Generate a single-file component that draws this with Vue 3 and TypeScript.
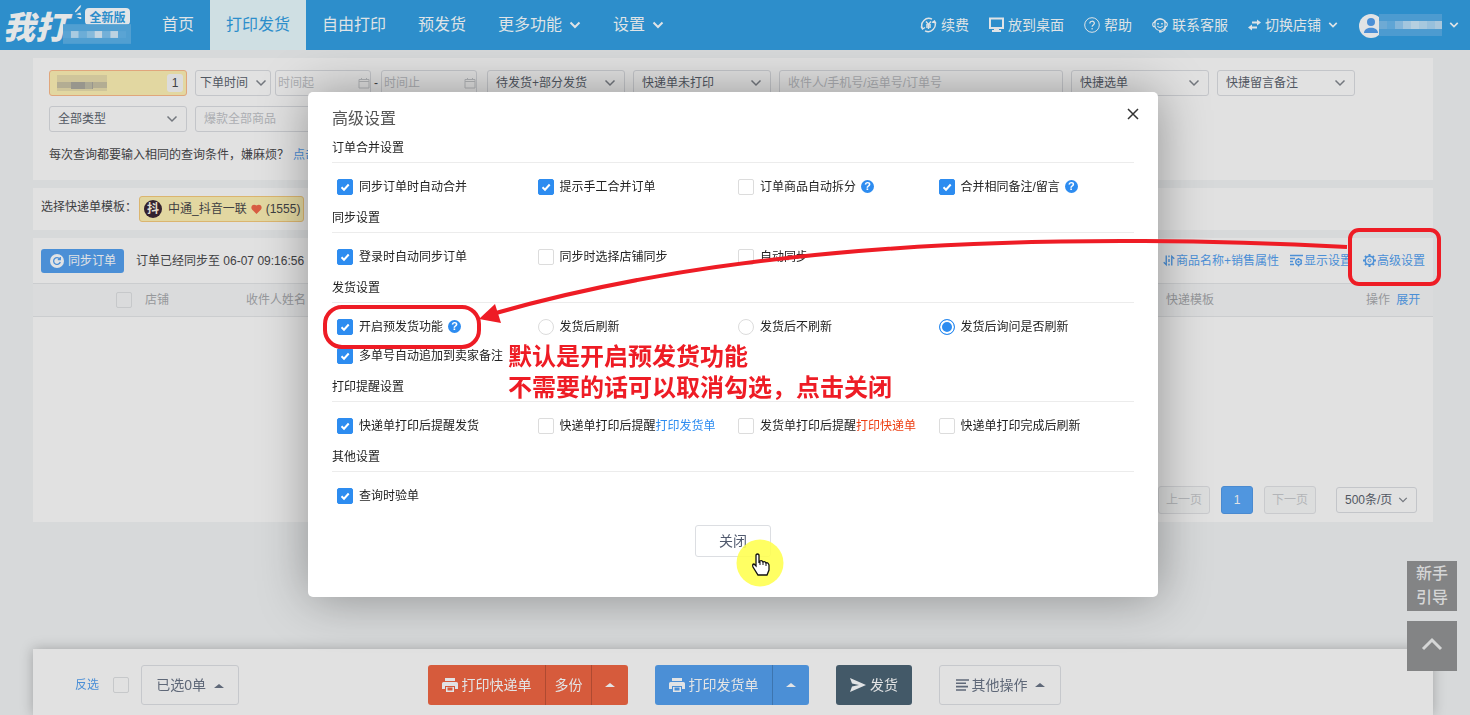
<script setup lang="ts">
import { ref } from 'vue'

interface Option {
  label: string
  type: 'checkbox' | 'radio'
  checked: boolean
  help?: boolean
  link?: string
  tone?: string
}
interface Section {
  title: string
  options: Option[]
}

const box = (label: string, checked: boolean, extra: Partial<Option> = {}): Option => ({
  label,
  type: 'checkbox',
  checked,
  ...extra,
})
const radio = (label: string, checked: boolean): Option => ({ label, type: 'radio', checked })

const sections = ref<Section[]>([
  {
    title: '订单合并设置',
    options: [
      box('同步订单时自动合并', true),
      box('提示手工合并订单', true),
      box('订单商品自动拆分', false, { help: true }),
      box('合并相同备注/留言', true, { help: true }),
    ],
  },
  {
    title: '同步设置',
    options: [box('登录时自动同步订单', true), box('同步时选择店铺同步', false), box('自动同步', false)],
  },
  {
    title: '发货设置',
    options: [
      box('开启预发货功能', true, { help: true }),
      radio('发货后刷新', false),
      radio('发货后不刷新', false),
      radio('发货后询问是否刷新', true),
      box('多单号自动追加到卖家备注', true),
    ],
  },
  {
    title: '打印提醒设置',
    options: [
      box('快递单打印后提醒发货', true),
      box('快递单打印后提醒', false, { link: '打印发货单', tone: 'tone-blue' }),
      box('发货单打印后提醒', false, { link: '打印快递单', tone: 'tone-orange' }),
      box('快递单打印完成后刷新', false),
    ],
  },
  { title: '其他设置', options: [box('查询时验单', true)] },
])

const nav = [
  { label: '首页' },
  { label: '打印发货', active: true },
  { label: '自由打印' },
  { label: '预发货' },
  { label: '更多功能', more: true },
  { label: '设置', more: true },
]

const logoMosaic = ['#5aa4d4', '#a9cbe1', '#6cadd7', '#86badb', '#c4d6e2', '#73b0d8', '#bdd3e1', '#5aa4d4']
const userMosaic = ['#6eaad4', '#5fa5d5', '#84b6da', '#a3c6de', '#b5cfe0', '#a6c8de', '#97c0dc', '#a9c7dc']
</script>

<template>
  <div class="page">
    <header class="top">
      <a class="logo" href="#" aria-label="我打 全新版">
        <span class="brand">我打</span>
        <svg class="spark" viewBox="0 0 12 16"><path d="M2 8 7 2 9 1 8 4 3 9Z M3 11 8 9 9 12Z M4 14 9 14 9 17Z" fill="#e3e5e6" /></svg>
        <span class="edition">全新版</span>
        <svg class="mosaic" viewBox="0 0 69 20">
          <rect width="69" height="20" fill="#519fd1" />
          <rect v-for="(c, i) in logoMosaic" :key="i" :x="i * 8" y="7" width="8" height="7" :fill="c" />
        </svg>
      </a>
      <nav class="nav">
        <a v-for="n in nav" :key="n.label" href="#" :class="{ active: n.active }">
          {{ n.label }}
          <svg v-if="n.more" class="chev" viewBox="0 0 12 12"><path d="M1.500 3.500 6 8 10.500 3.500" /></svg>
        </a>
      </nav>
      <div class="tools">
        <a href="#">
          <svg width="17" height="16" viewBox="0 0 17 16" fill="none" stroke="#dfe3e6" stroke-width="1.400">
            <path d="M2.500 11.500A7 7 0 0 1 12 2.200M14.500 4.500A7 7 0 0 1 5 13.800M1 9.500l1.500 2.500 2.500-1.500M16 6.500 14.500 4 12 5.500M6 4.500 8.500 7.500 11 4.500M8.500 7.500V12M6 8h5M6 10h5" />
          </svg>续费</a>
        <a href="#">
          <svg width="15" height="16" viewBox="0 0 15 16"><path d="M1 1.500h13v9.500H1z" fill="none" stroke="#dfe3e6" stroke-width="2" /><path d="M5 11h5v2h2v2H3v-2h2z" fill="#dfe3e6" /></svg>放到桌面</a>
        <a href="#">
          <svg width="16" height="16" viewBox="0 0 16 16" fill="none" stroke="#dfe3e6"><circle cx="8" cy="8" r="7.300" /><path d="M5.800 6.500c0-3 4.600-3 4.600-.2 0 1.700-2.300 1.700-2.300 3.400M8.100 11v1.500" stroke-width="1.200" /></svg>帮助</a>
        <a href="#">
          <svg width="16" height="16" viewBox="0 0 16 16" fill="none" stroke="#dfe3e6">
            <path d="M3 9V6.500a5 5 0 0 1 10 0V9a5 4.500 0 0 1-10 0zM2 5.500a6.500 5.500 0 0 1 12 0M3 5.500C1.500 5 .7 6 .7 7.500S1.500 10 3 9.500M13 5.500c1.500-.5 2.300.5 2.300 2S14.500 10 13 9.500M13.500 10c0 3-2 4.500-5 5M5.500 9c1 2 4 2 5 0" stroke-width="1.100" />
            <path d="M6 6v1.500M10 6v1.500M7 14.800h2.500" stroke-width="1.600" />
          </svg>联系客服</a>
        <a href="#">
          <svg width="13" height="12" viewBox="0 0 13 12" fill="#dfe3e6"><path d="M4 2.500h5V.5L13 3.500 9 6.500v-2H4zM9 7.500H4v-2L0 8.500l4 3v-2h5z" /></svg>切换店铺
          <svg class="chev small" viewBox="0 0 12 12"><path d="M1.500 3.500 6 8 10.500 3.500" /></svg>
        </a>
        <a href="#" class="user" aria-label="账户">
          <svg width="84" height="26" viewBox="0 0 84 26">
            <circle cx="13" cy="14" r="12" fill="#e1e3e5" />
            <circle cx="13" cy="10" r="4" fill="#4b8fd6" />
            <path d="M6 21c0-7 14-7 14 0z" fill="#4b8fd6" />
            <rect x="21" y="2" width="64" height="22" fill="#4d9bd0" />
            <rect v-for="(c, i) in userMosaic" :key="i" :x="21 + i * 8" y="9" width="8" height="8" :fill="c" />
          </svg>
          <svg class="chev small" viewBox="0 0 12 12"><path d="M1.500 3.500 6 8 10.500 3.500" /></svg>
        </a>
      </div>
    </header>

    <main class="main">
      <section class="panel filters">
        <div class="row">
          <button class="shop" type="button" aria-label="已选店铺">
            <svg class="blur" viewBox="0 0 50 16"><rect width="50" height="16" fill="#cfc59a" /><rect y="7" width="50" height="6" fill="#b3ad93" /><rect x="14" y="7" width="22" height="7" fill="#98968d" /><rect x="28" y="7" width="7" height="7" fill="#aca995" /></svg>
            <span class="count">1</span>
          </button>
          <span class="pick w76"><select aria-label="时间类型"><option>下单时间</option></select><svg class="chev dark" viewBox="0 0 12 12"><path d="M1.500 3.500 6 8 10.500 3.500" /></svg></span>
          <span class="range">
            <span class="date"><input aria-label="时间起" placeholder="时间起" /><svg viewBox="0 0 12 12"><path d="M1 2.500h10v8.500H1zM1 4.500h10M3.500 1v2M8.500 1v2" /></svg></span>
            <span class="dash">-</span>
            <span class="date"><input aria-label="时间止" placeholder="时间止" /><svg viewBox="0 0 12 12"><path d="M1 2.500h10v8.500H1zM1 4.500h10M3.500 1v2M8.500 1v2" /></svg></span>
          </span>
          <span class="pick"><select aria-label="发货状态"><option>待发货+部分发货</option></select><svg class="chev dark" viewBox="0 0 12 12"><path d="M1.500 3.500 6 8 10.500 3.500" /></svg></span>
          <span class="pick"><select aria-label="打印状态"><option>快递单未打印</option></select><svg class="chev dark" viewBox="0 0 12 12"><path d="M1.500 3.500 6 8 10.500 3.500" /></svg></span>
          <input class="text wide" aria-label="搜索" placeholder="收件人/手机号/运单号/订单号" />
          <span class="pick"><select aria-label="快捷选单"><option>快捷选单</option></select><svg class="chev dark" viewBox="0 0 12 12"><path d="M1.500 3.500 6 8 10.500 3.500" /></svg></span>
          <span class="pick"><select aria-label="快捷留言备注"><option>快捷留言备注</option></select><svg class="chev dark" viewBox="0 0 12 12"><path d="M1.500 3.500 6 8 10.500 3.500" /></svg></span>
        </div>
        <div class="row">
          <span class="pick"><select aria-label="订单类型"><option>全部类型</option></select><svg class="chev dark" viewBox="0 0 12 12"><path d="M1.500 3.500 6 8 10.500 3.500" /></svg></span>
          <input class="text" aria-label="商品" placeholder="爆款全部商品" />
        </div>
        <p class="hint">每次查询都要输入相同的查询条件，嫌麻烦？<a href="#">点击</a></p>
      </section>

      <section class="panel templates">
        <span>选择快递单模板：</span>
        <button class="tag" type="button">
          <span class="dou">抖</span>
          <span>中通_抖音一联</span>
          <svg width="11" height="10" viewBox="0 0 11 10"><path d="M5.500 10 1 5.500C-1 2.500 2-1 5.500 1.500 9-1 12 2.500 10 5.500z" fill="#d85d43" /></svg>
          <span>(1555)</span>
        </button>
      </section>

      <section class="panel orders">
        <div class="bar">
          <button class="sync" type="button">
            <svg width="14" height="14" viewBox="0 0 14 14"><circle cx="7" cy="7" r="7" fill="#e1e3e5" /><path d="M9.800 5A3.400 3.400 0 1 0 10.300 8M10.300 3v2.500H7.800" fill="none" stroke="#4b8fd6" stroke-width="1.300" /></svg>
            同步订单
          </button>
          <span class="status">订单已经同步至 06-07 09:16:56</span>
          <div class="links">
            <a href="#"><svg width="12" height="13" viewBox="0 0 13 13" fill="none" stroke="#4b8fd6" stroke-width="1.500"><path d="M3.500 1v10L.8 8.500M9.500 12V2l2.700 2.500M6.500 1v2M6.500 5v3M6.500 10v2" /></svg>商品名称+销售属性</a>
            <a href="#"><svg width="13" height="13" viewBox="0 0 13 13" fill="none" stroke="#4b8fd6" stroke-width="1.300"><path d="M0 1.500h13M0 4.500h5M0 7.500h3M0 10.500h4" /><circle cx="8.500" cy="8" r="2.800" /><circle cx="8.500" cy="8" r=".5" /><path d="M8.500 4v1M8.500 11v1.500M12 6l-1 .5M12 10l-1-.5" /></svg>显示设置</a>
            <a href="#"><svg width="13" height="13" viewBox="0 0 13 13" fill="none" stroke="#4b8fd6"><circle cx="6.500" cy="6.500" r="4.300" stroke-width="1.500" /><circle cx="6.500" cy="6.500" r="1.500" /><path d="M6.500 0v2M6.500 11v2M0 6.500h2M11 6.500h2M2 2l1.300 1.300M9.700 9.700 11 11M2 11l1.300-1.300M9.700 3.300 11 2" stroke-width="2" /></svg>高级设置</a>
          </div>
        </div>
        <table class="grid">
          <colgroup><col class="c1" /><col class="c2" /><col /><col class="c4" /><col class="c5" /></colgroup>
          <thead>
            <tr>
              <th class="check"><input type="checkbox" aria-label="全选订单" /></th>
              <th>店铺</th>
              <th>收件人姓名</th>
              <th>快递模板</th>
              <th>操作 <a href="#">展开</a></th>
            </tr>
          </thead>
        </table>
        <div class="pager">
          <button type="button" disabled>上一页</button>
          <button type="button" class="current">1</button>
          <button type="button" disabled>下一页</button>
          <span class="pick size"><select aria-label="每页条数"><option>500条/页</option></select><svg class="chev dark" viewBox="0 0 12 12"><path d="M1.500 3.500 6 8 10.500 3.500" /></svg></span>
        </div>
      </section>
    </main>

    <footer class="dock">
      <a class="invert" href="#">反选</a>
      <input type="checkbox" aria-label="全选" />
      <button class="plain selected" type="button">已选0单 <i class="up"></i></button>
      <div class="actions">
        <div class="split red">
          <button type="button"><svg width="16" height="14" viewBox="0 0 16 14" fill="#e1e3e5"><path d="M3 0h10v3H3zM1.500 4h13Q16 4 16 5.500V11h-3V8H3v3H0V5.500Q0 4 1.500 4zM4 9h8v5H4z" /><path d="M5.500 9.500h5v3h-5z" fill="#d65b3c" /></svg>打印快递单</button>
          <button type="button">多份</button>
          <button type="button" aria-label="更多"><i class="up"></i></button>
        </div>
        <div class="split azure">
          <button type="button"><svg width="16" height="14" viewBox="0 0 16 14" fill="#e1e3e5"><path d="M3 0h10v3H3zM1.500 4h13Q16 4 16 5.500V11h-3V8H3v3H0V5.500Q0 4 1.500 4zM4 9h8v5H4z" /><path d="M5.500 9.500h5v3h-5z" fill="#4b8fd6" /></svg>打印发货单</button>
          <button type="button" aria-label="更多"><i class="up"></i></button>
        </div>
        <button class="ship" type="button"><svg width="16" height="14" viewBox="0 0 16 14"><path d="M0 0 16 7 0 14 2 8.500 9 7 2 5.500z" fill="#e1e3e5" /></svg>发货</button>
        <button class="plain other" type="button"><svg width="13" height="12" viewBox="0 0 13 12"><path d="M0 1h13M0 4.300h10M0 7.600h12M0 11h10" stroke="#5f6878" stroke-width="1.600" /></svg>其他操作 <i class="up"></i></button>
      </div>
    </footer>

    <aside class="side">
      <button type="button">新手引导</button>
      <button type="button" aria-label="回到顶部"><svg width="22" height="14" viewBox="0 0 22 14"><path d="M2 12 11 3 20 12" fill="none" stroke="#d5d6d6" stroke-width="3" /></svg></button>
    </aside>

    <div class="layer">
      <div class="dialog" role="dialog" aria-labelledby="dialog-title">
        <div class="head">
          <h2 id="dialog-title">高级设置</h2>
          <button type="button" aria-label="关闭窗口"><svg width="12" height="12" viewBox="0 0 12 12"><path d="M1 1 11 11M11 1 1 11" stroke="#333" stroke-width="1.500" /></svg></button>
        </div>
        <section v-for="s in sections" :key="s.title" class="group">
          <h3>{{ s.title }}</h3>
          <div class="options">
            <label v-for="o in s.options" :key="o.label">
              <input :type="o.type" :name="o.type === 'radio' ? 'refresh' : undefined" :checked="o.checked" />
              <span>{{ o.label }}<a v-if="o.link" href="#" :class="o.tone">{{ o.link }}</a></span>
              <b v-if="o.help" class="help">?</b>
            </label>
          </div>
        </section>
        <button class="close" type="button">关闭</button>

        <svg class="marks" viewBox="308 92 850 505" fill="none" stroke="#ee1c25" stroke-width="4">
          <rect x="325" y="307" width="154" height="40" rx="17" />
          <rect x="1350" y="230" width="89" height="54" rx="9" />
          <path d="M496 313C740 243 1050 232 1347 247" />
          <path d="M479 319 495 304 501 323Z" fill="#ee1c25" stroke="none" />
          <circle cx="760" cy="563" r="23.500" fill="#ffff4d" fill-opacity=".88" stroke="none" />
          <path d="M757 555q1.500-2 3 0v8l1-2q2-1 3 1 2-1 3 1 2-1 3 2v5l-2 5h-9l-5-8q-1-3 1-3l2 2z" transform="translate(-1 0)" fill="#fff" stroke="#111" stroke-width="1.300" />
          <path d="M760 562v3M763 562v3M766 563v3" stroke="#111" stroke-width="1" />
        </svg>
        <p class="note">默认是开启预发货功能<br />不需要的话可以取消勾选，点击关闭</p>
      </div>
    </div>
  </div>
</template>

<style>
html,
body {
  background: #d7d9da;
}
body {
  margin: 0;
}
</style>

<style scoped>
.page {
  min-height: 100vh;
  font: 12px/18px "Liberation Sans", "Noto Sans CJK SC", sans-serif;
  color: #3f4043;
  background: #d7d9da;
}
* {
  box-sizing: border-box;
}
a {
  color: #4b8fd6;
  text-decoration: none;
}
button,
input,
select {
  margin: 0;
  font: inherit;
  color: inherit;
}
button {
  padding: 0;
  border: 0;
  background: none;
  white-space: nowrap;
}
svg {
  flex: none;
}
.chev {
  width: 12px;
  height: 12px;
  fill: none;
  stroke: #dfe3e6;
  stroke-width: 2;
}
.nav .chev {
  margin-left: 1px;
}
.tools .chev {
  width: 10px;
  margin-left: 3px;
}
.chev.dark {
  stroke: #73777e;
  stroke-width: 1.5;
}

.top {
  position: relative;
  z-index: 5;
  display: flex;
  height: 50px;
  padding-right: 11px;
  background: #2d8ecb;
}
.logo {
  position: relative;
  width: 146px;
  color: #e3e5e6;
}
.brand {
  position: absolute;
  left: 3px;
  top: 5px;
  font: italic 900 32px/40px "Noto Sans CJK SC", sans-serif;
}
.spark {
  position: absolute;
  left: 73px;
  top: 4px;
  width: 11px;
  height: 15px;
}
.edition {
  position: absolute;
  left: 85px;
  top: 8px;
  width: 45px;
  border-radius: 4px;
  background: #e1e5e8;
  color: #2d8ecb;
  font: bold 12px/17px "Noto Sans CJK SC", sans-serif;
  text-align: center;
}
.mosaic {
  position: absolute;
  left: 63px;
  top: 24px;
  width: 68px;
  height: 20px;
}
.nav {
  display: flex;
}
.nav a {
  display: flex;
  align-items: center;
  gap: 6px;
  padding: 0 16px;
  font-size: 16px;
  color: #dfe3e6;
  white-space: nowrap;
}
.nav a.active {
  background: #cfdfe3;
  color: #2d8ecb;
}
.tools {
  display: flex;
  gap: 20px;
  margin-left: auto;
}
.tools a {
  display: flex;
  align-items: center;
  gap: 4px;
  font-size: 14px;
  color: #dfe3e6;
  white-space: nowrap;
}

.main {
  display: flex;
  flex-direction: column;
  gap: 8px;
  padding: 8px 37px 0 33px;
}
.panel {
  background: #e1e1e1;
}
.filters {
  height: 122px;
  padding: 12px 16px;
  overflow: hidden;
}
.row {
  display: flex;
  gap: 8px;
  height: 26px;
  margin-bottom: 10px;
}
.shop {
  display: flex;
  align-items: center;
  justify-content: space-between;
  width: 138px;
  padding: 0 3px 0 7px;
  border: 1px solid #e0a67c;
  border-radius: 3px;
  background: #e2d7a1;
}
.blur {
  width: 50px;
  height: 16px;
}
.count {
  width: 16px;
  border-radius: 3px;
  background: #dcdcdc;
}
.pick {
  position: relative;
  display: block;
  width: 138px;
  color: #515761;
}
.pick select,
.text,
.date input {
  width: 100%;
  height: 26px;
  padding: 0 8px;
  border: 1px solid #c3c5c9;
  border-radius: 3px;
  background: transparent;
  appearance: none;
  outline: 0;
}
.pick .chev {
  position: absolute;
  right: 9px;
  top: 7px;
}
.pick.w76 {
  width: 76px;
}
.w76 select {
  padding: 0 4px;
}
.w76 .chev {
  right: 4px;
}
.range {
  display: flex;
  align-items: center;
  width: 202px;
  margin: 0 2px 0 -4px;
}
.date {
  position: relative;
  width: 96px;
}
.date input {
  padding: 0 2px;
}
.date svg {
  position: absolute;
  right: 1px;
  top: 7px;
  width: 12px;
  height: 12px;
  fill: none;
  stroke: #b3b5b8;
}
.dash {
  width: 10px;
  text-align: center;
}
.text {
  width: 138px;
}
.text.wide {
  width: 284px;
}
::placeholder {
  color: #acaeb2;
  opacity: 1;
}
.hint {
  display: flex;
  gap: 4px;
  margin: 14px 0 0;
}

.templates {
  display: flex;
  align-items: flex-start;
  gap: 2px;
  height: 42px;
  padding: 8px;
}
.templates > span {
  width: 96px;
  padding-top: 2px;
  white-space: nowrap;
}
.tag {
  display: flex;
  align-items: center;
  gap: 4px;
  height: 26px;
  padding: 0 3px 0 4px;
  border: 1px solid #dbb56f;
  border-radius: 3px;
  background: #e2d7a1;
}
.dou {
  width: 18px;
  margin-right: 2px;
  border-radius: 9px;
  background: #33222f;
  color: #e4dfd0;
  font-weight: bold;
}

.orders {
  height: 284px;
}
.bar {
  display: flex;
  align-items: center;
  height: 45px;
  padding: 0 8px;
}
.sync {
  display: flex;
  align-items: center;
  gap: 4px;
  height: 24px;
  padding: 0 8px 0 9px;
  border-radius: 3px;
  background: #4b8fd6;
  color: #e1e3e5;
}
.status {
  margin-left: 12px;
}
.links {
  display: flex;
  gap: 11px;
  margin-left: auto;
}
.links a {
  display: flex;
  align-items: center;
  gap: 1px;
}
.grid {
  width: 100%;
  table-layout: fixed;
  border-collapse: collapse;
  border-top: 1px solid #cbcdcf;
  border-bottom: 1px solid #cbcdcf;
  background: #dadbdc;
}
.grid th {
  height: 33px;
  padding: 0;
  color: #96989b;
  font-weight: normal;
  text-align: left;
}
.grid .check {
  padding: 4px 13px 0 0;
  text-align: right;
}
.c1 {
  width: 112px;
}
.c2 {
  width: 101px;
}
.c4 {
  width: 200px;
}
.c5 {
  width: 67px;
}
.grid a {
  margin-left: 3px;
}
input[type='checkbox'],
input[type='radio'] {
  flex: none;
  width: 16px;
  height: 16px;
  border: 1px solid #c6c8ca;
  border-radius: 2px;
  background: transparent;
  appearance: none;
}
.pager {
  display: flex;
  align-items: center;
  gap: 11px;
  margin: 169px 16px 0;
  justify-content: flex-end;
}
.pager button {
  width: 52px;
  height: 28px;
  border: 1px solid #c9cacd;
  border-radius: 3px;
  background: #dcdddd;
  color: #b3b5b8;
}
.pager .current {
  width: 32px;
  border-color: #4a8ad0;
  background: #5096df;
  color: #e1e3e5;
}
.pager .size {
  width: 81px;
  margin-left: 9px;
}
.size .chev {
  width: 10px;
}

.dock {
  position: fixed;
  left: 33px;
  right: 37px;
  bottom: 0;
  display: flex;
  align-items: center;
  height: 66px;
  padding: 6px 42px 0;
  background: #e1e1e1;
  box-shadow: 0 0 12px rgba(0, 0, 0, 0.25);
  font-size: 14px;
}
.invert {
  margin-right: 14px;
  font-size: 12px;
}
.plain {
  height: 40px;
  border: 1px solid #c6c8cc;
  border-radius: 3px;
  color: #5f6878;
}
.selected {
  width: 98px;
  margin-left: 12px;
}
.up {
  display: inline-block;
  margin: 0 0 2px 4px;
  border: 5px solid transparent;
  border-top: 0;
  border-bottom: 4px solid currentColor;
}
.actions {
  display: flex;
  gap: 27px;
  margin-left: 189px;
}
.split {
  display: flex;
  border-radius: 3px;
  overflow: hidden;
  color: #e3e4e5;
}
.split.red {
  background: #d65b3c;
}
.split.azure {
  background: #4b8fd6;
}
.split button {
  display: flex;
  align-items: center;
  justify-content: center;
  gap: 4px;
  width: 46px;
  height: 40px;
}
.split button:first-child {
  width: 117px;
}
.split button:last-child {
  width: 37px;
}
.split button + button {
  border-left: 1px solid rgba(0, 0, 0, 0.18);
}
.split .up {
  margin: 0;
}
.ship,
.other {
  display: flex;
  align-items: center;
  justify-content: center;
}
.ship {
  gap: 4px;
  width: 76px;
  height: 40px;
  border-radius: 3px;
  background: #435968;
  color: #e3e4e5;
}
.other {
  gap: 3px;
  width: 122px;
}
.other .up {
  margin-bottom: 0;
}

.side {
  position: fixed;
  right: 13px;
  bottom: 44px;
  display: flex;
  flex-direction: column;
  gap: 10px;
}
.side button {
  width: 50px;
  height: 50px;
  padding: 0 8px;
  background: #838485;
  color: #d5d6d6;
  font-size: 16px;
  font-weight: 500;
  line-height: 24px;
  white-space: normal;
}

.layer {
  position: fixed;
  inset: 0 4px 0 0;
  display: flex;
  align-items: flex-start;
  justify-content: center;
  padding-top: 92px;
}
.dialog {
  position: relative;
  width: 850px;
  padding: 15px 24px 40px;
  border-radius: 5px;
  background: #fff;
  box-shadow: 1px 1px 50px rgba(0, 0, 0, 0.35);
  color: #222;
}
.head {
  display: flex;
  justify-content: space-between;
  height: 27px;
}
.head h2 {
  margin: 0;
  color: #555;
  font-size: 16px;
  font-weight: normal;
  line-height: 24px;
}
.head button {
  width: 12px;
  height: 14px;
  margin-right: -5px;
}
.group h3 {
  height: 29px;
  margin: 0;
  border-bottom: 1px solid #ececec;
  font-size: 12px;
  font-weight: normal;
  line-height: 29px;
}
.options {
  display: grid;
  grid-template-columns: repeat(4, 1fr);
  padding: 9px 0 3px;
}
.options label {
  display: flex;
  align-items: center;
  gap: 6px;
  height: 29px;
  padding-left: 5px;
  white-space: nowrap;
}
.options input[type] {
  border-color: #dcdcdc;
}
.options input[type='checkbox']:checked {
  border-color: #2d8cf0;
  background: #2d8cf0 url("data:image/svg+xml,%3Csvg xmlns='http://www.w3.org/2000/svg' viewBox='0 0 14 14'%3E%3Cpath d='M3.500 7.200 6 9.700 10.700 4.500' fill='none' stroke='white' stroke-width='2'/%3E%3C/svg%3E");
}
.options input[type='radio'] {
  border-radius: 8px;
}
.options input[type='radio']:checked {
  border-color: #2d8cf0;
  background: #2d8cf0;
  box-shadow: inset 0 0 0 2px #fff;
}
.tone-blue {
  color: #2d8cf0;
}
.tone-orange {
  color: #ed4014;
}
.help {
  width: 13px;
  height: 13px;
  margin-left: -1px;
  border-radius: 7px;
  background: #2d8cf0;
  color: #fff;
  font-size: 11px;
  line-height: 13px;
  text-align: center;
}
.close {
  display: block;
  width: 76px;
  height: 32px;
  margin: 12px auto 0;
  border: 1px solid #dcdee2;
  border-radius: 3px;
  color: #515a6e;
  font-size: 14px;
}
.marks {
  position: absolute;
  inset: 0;
  width: 100%;
  height: 100%;
  overflow: visible;
  pointer-events: none;
}
.note {
  position: absolute;
  left: 200px;
  top: 249px;
  margin: 0;
  color: #ee1c25;
  font-size: 24px;
  font-weight: bold;
  line-height: 31px;
  white-space: nowrap;
}
</style>
